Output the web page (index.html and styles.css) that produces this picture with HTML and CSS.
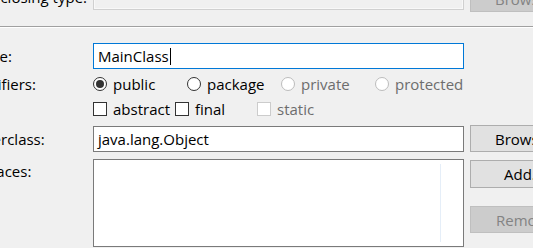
FILE: index.html
```html
<html lang="en">
<head>
<title>New Java Class</title>
<link rel="stylesheet" href="styles.css">
</head>
<body>
  <div class="dialog">
    <div class="row enclosing">
      <div class="label"><span class="check"></span>Enclosing type:</div>
      <div class="field disabled"></div>
      <div class="btn disabled browse">Browse...</div>
    </div>

    <div class="separator"></div>

    <div class="row name">
      <div class="label">Name:</div>
      <div class="field focused">MainClass<span class="caret"></span></div>
    </div>

    <div class="row modifiers">
      <div class="label">Modifiers:</div>
      <div class="radios">
        <div class="opt"><span class="radio on"></span>public</div>
        <div class="opt"><span class="radio"></span>package</div>
        <div class="opt off"><span class="radio"></span>private</div>
        <div class="opt off"><span class="radio"></span>protected</div>
      </div>
    </div>

    <div class="row flags">
      <div class="label"></div>
      <div class="checks">
        <div class="opt"><span class="check"></span>abstract</div>
        <div class="opt"><span class="check"></span>final</div>
        <div class="opt off"><span class="check"></span>static</div>
      </div>
    </div>

    <div class="row superclass">
      <div class="label">Superclass:</div>
      <div class="field">java.lang.Object</div>
      <div class="btn browse">Browse...</div>
    </div>

    <div class="row interfaces">
      <div class="label top">Interfaces:</div>
      <div class="list"><div class="col"></div></div>
      <div class="buttons">
        <div class="btn add">Add...</div>
        <div class="btn disabled remove">Remove</div>
      </div>
    </div>
  </div>
</body>
</html>
```

FILE: styles.css
```css
body {
  margin: 0;
  background: #f0f0f0;
  overflow: hidden;
  font-family: "Open Sans", "Noto Sans", sans-serif;
  font-size: 15px;
  color: #000;
}

.dialog {
  margin-left: -34px;
  width: 700px;
}

.row {
  display: grid;
  grid-template-columns: 121px 371px 110px;
  column-gap: 6px;
  align-items: center;
}

.label {
  display: flex;
  align-items: center;
  white-space: nowrap;
}
.label.top {
  align-self: start;
  margin-top: 2px;
  margin-left: -8px;
}

.enclosing {
  margin-top: -16px;
  height: 26px;
  align-items: start;
}
.enclosing .label {
  margin-left: -3px;
  height: 26px;
}
.enclosing .label .check {
  margin-right: 6px;
}

.separator {
  margin-top: 16px;
  border-top: 1px solid #a0a0a0;
  border-bottom: 1px solid #fff;
}

.field {
  height: 26px;
  box-sizing: border-box;
  border: 1px solid #7a7a7a;
  background: #fff;
  padding: 0 4px;
  display: flex;
  align-items: center;
  white-space: nowrap;
}
.field.disabled {
  background: #f0f0f0;
  border-color: #d0d0d0;
  box-shadow: inset 0 0 0 1px #f8f8f8;
}
.field.focused {
  border-color: #0078d7;
}

.caret {
  display: inline-block;
  width: 1px;
  height: 17px;
  background: #000;
  margin-left: 1px;
}

.name {
  margin-top: 15px;
}

.modifiers {
  margin-top: 5px;
  height: 20px;
}
.flags {
  margin-top: 5px;
  height: 20px;
}

.radios,
.checks {
  display: flex;
  grid-column: 2 / 4;
}
.radios .opt {
  width: 94px;
}
.checks .opt {
  width: 82px;
}

.opt {
  display: flex;
  align-items: center;
  white-space: nowrap;
}
.opt.off {
  color: #6d6d6d;
}

.radio {
  width: 14px;
  height: 14px;
  box-sizing: border-box;
  border: 1px solid #333;
  border-radius: 50%;
  background: #fff;
  margin-right: 6px;
  display: flex;
  align-items: center;
  justify-content: center;
}
.radio.on::after {
  content: "";
  width: 8px;
  height: 8px;
  border-radius: 50%;
  background: #333;
}
.opt.off .radio {
  border-color: #bcbcbc;
}

.check {
  display: inline-block;
  width: 14px;
  height: 14px;
  box-sizing: border-box;
  border: 1px solid #333;
  background: #fff;
  margin-right: 6px;
}
.opt.off .check {
  border-color: #cccccc;
}

.btn {
  height: 27px;
  box-sizing: border-box;
  border: 1px solid #adadad;
  background: #e1e1e1;
  display: flex;
  align-items: center;
  white-space: nowrap;
  padding-left: 24px;
}
.btn.disabled {
  background: #cccccc;
  border-color: #bfbfbf;
  color: #838383;
}
.enclosing .btn {
  margin-top: 1px;
}

.superclass {
  margin-top: 7px;
}
.superclass .btn {
  margin-top: -1px;
}

.interfaces {
  margin-top: 7px;
  align-items: start;
}

.list {
  height: 88px;
  box-sizing: border-box;
  border: 1px solid #7a7a7a;
  background: #fff;
  position: relative;
}
.list .col {
  position: absolute;
  left: 346px;
  top: 4px;
  bottom: 4px;
  width: 1px;
  background: #e5eef8;
}

.buttons {
  display: flex;
  flex-direction: column;
}
.btn.add {
  margin-top: 1px;
  height: 28px;
  padding-left: 33px;
}
.btn.remove {
  margin-top: 18px;
  padding-left: 25px;
}
```
